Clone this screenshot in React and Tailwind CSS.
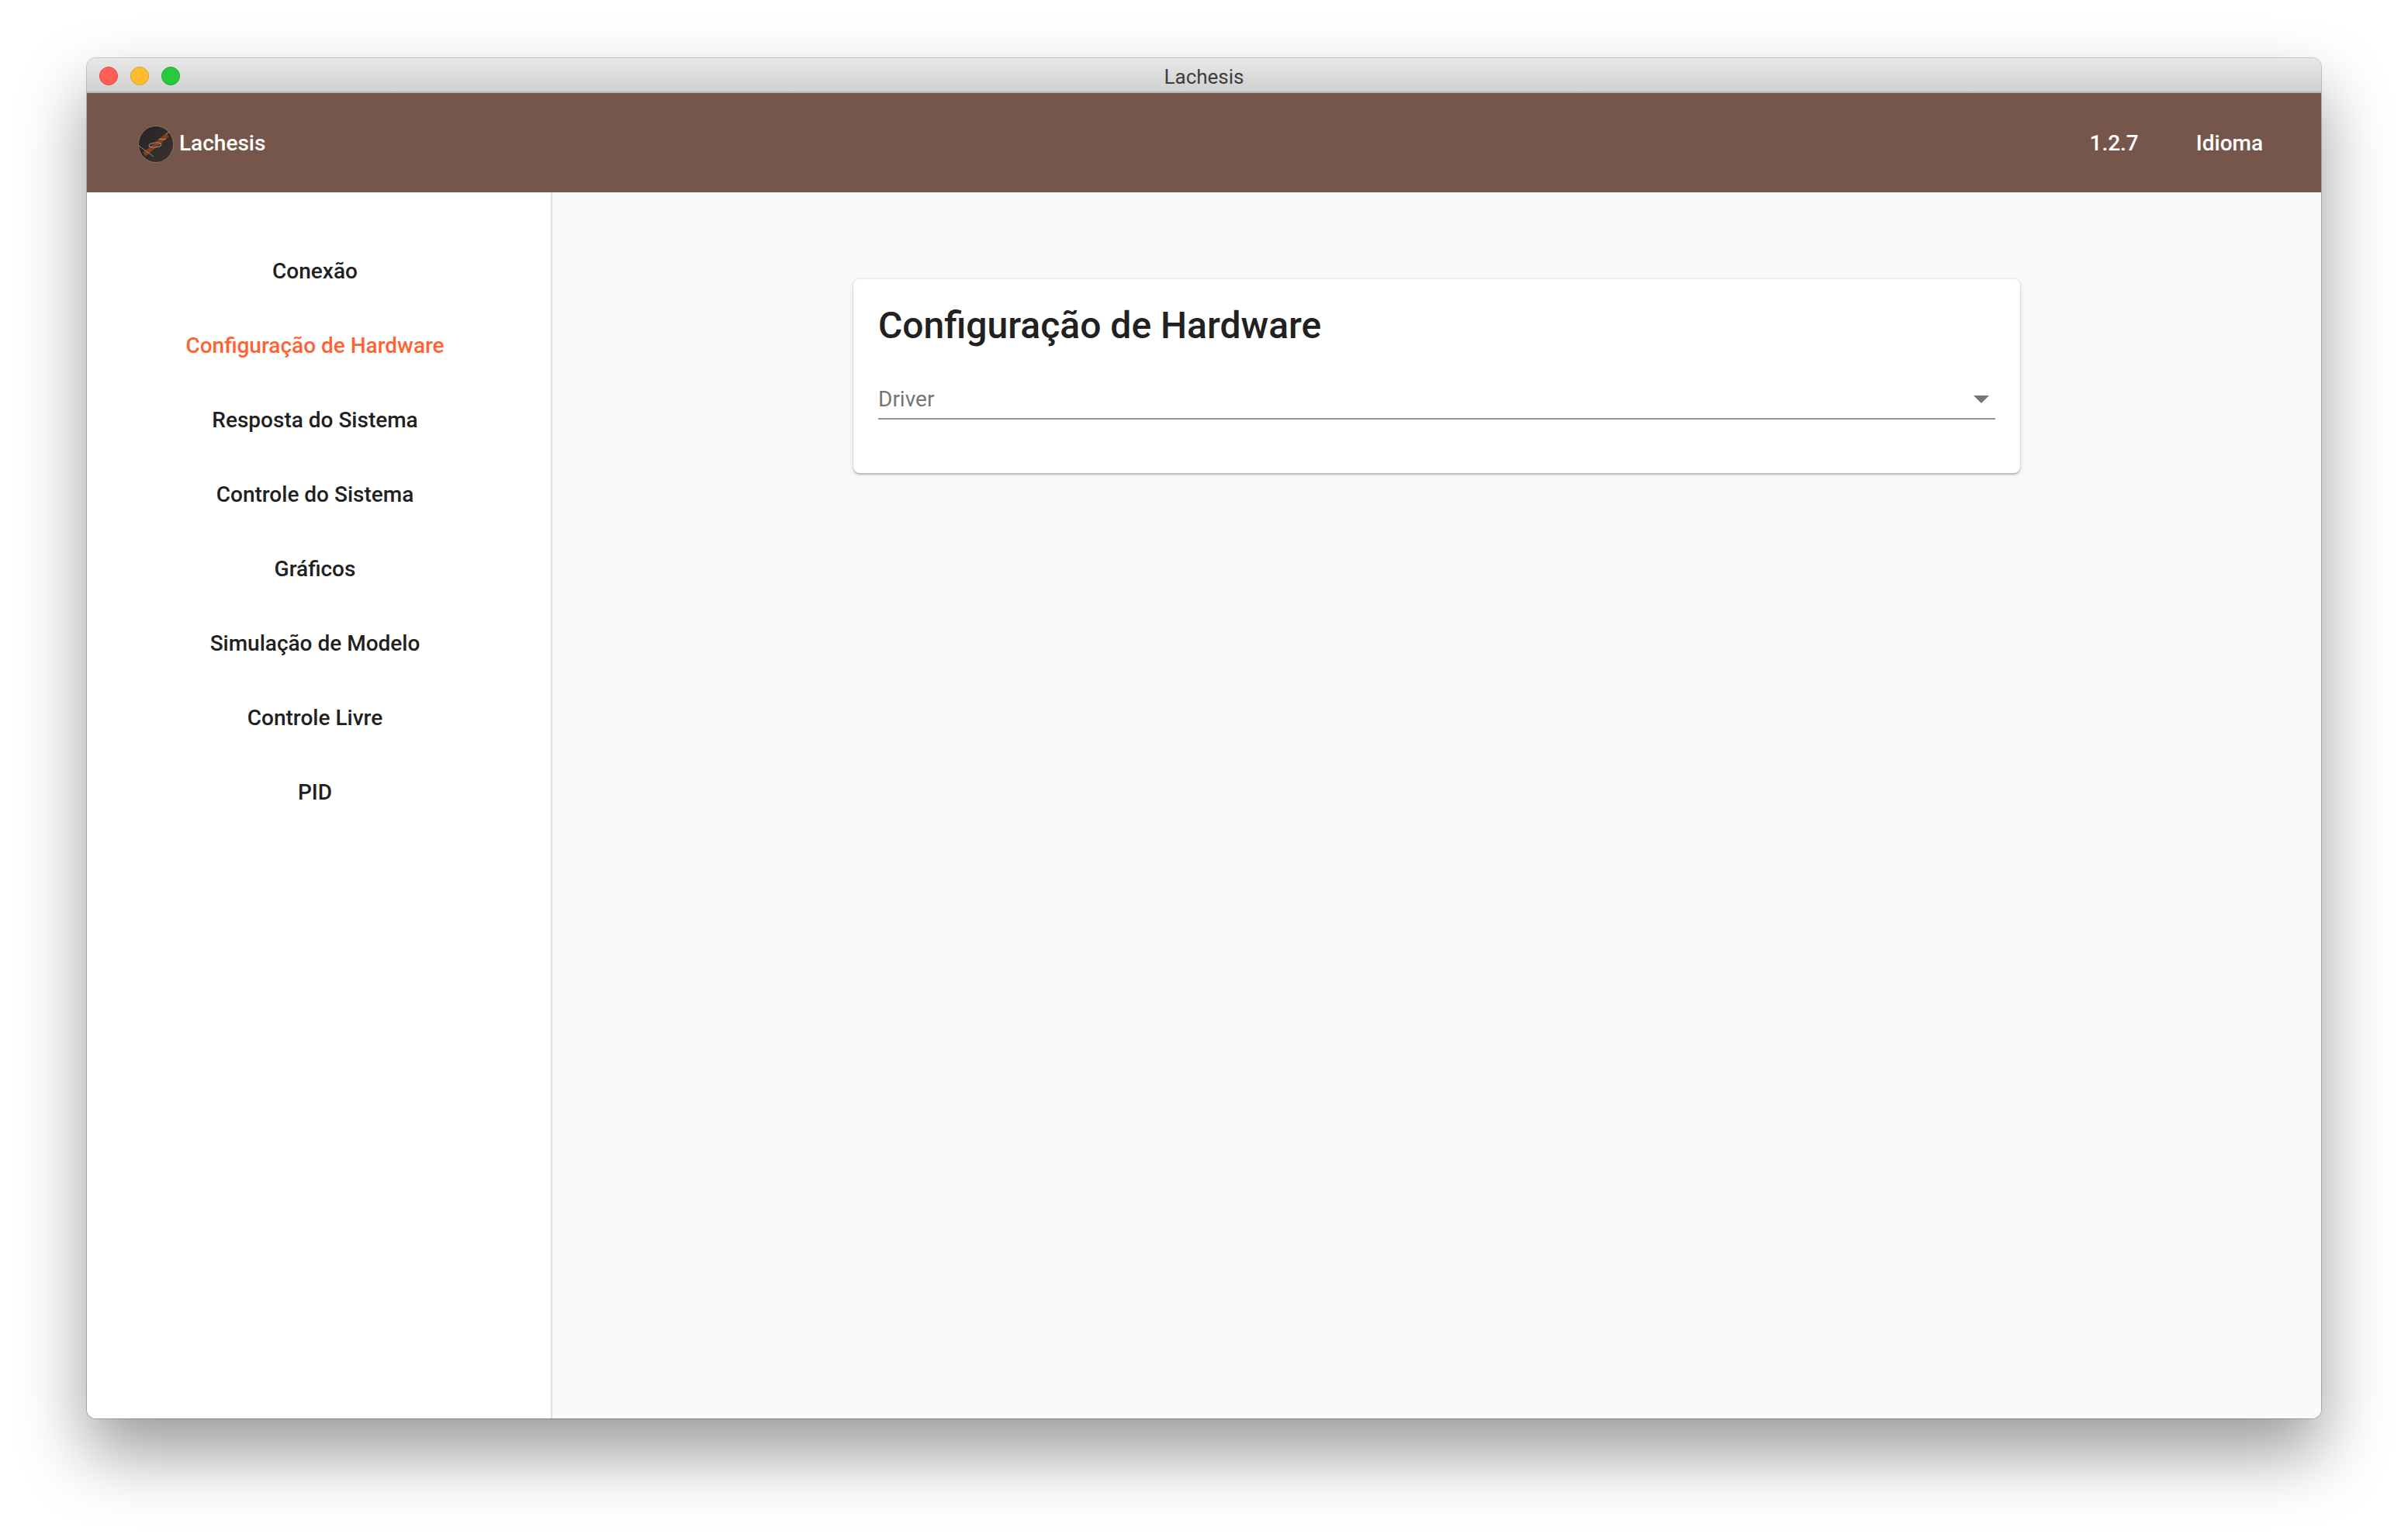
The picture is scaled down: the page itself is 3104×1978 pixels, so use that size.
const items = ["Conexão", "Configuração de Hardware", "Resposta do Sistema", "Controle do Sistema", "Gráficos", "Simulação de Modelo", "Controle Livre", "PID"];

function Logo() {
  return (
    <svg width="46" height="48" viewBox="0 0 46 48" className="shrink-0 relative top-[2px]">
      <defs>
        <linearGradient id="g" x1="0" y1="0" x2="1" y2="1">
          <stop offset="0" stopColor="#252322" />
          <stop offset="1" stopColor="#3a3230" />
        </linearGradient>
      </defs>
      <ellipse cx="23" cy="24" rx="22.5" ry="23.5" fill="url(#g)" stroke="#8b7a72" strokeWidth="0.8" />
      <path d="M8 37 L38 12" stroke="#873d16" strokeWidth="6" />
      <ellipse cx="22" cy="25" rx="8" ry="3" fill="none" stroke="#8d8a88" strokeWidth="1" transform="rotate(-5 22 25)" />
      <path d="M1 26 L20 40" stroke="#8d8a88" strokeWidth="1" fill="none" />
      <path d="M27 17 Q32 19 36 17 M36 11 L40 8" stroke="#a8a39f" strokeWidth="1" fill="none" />
    </svg>
  );
}

export default function App() {
  return (
    <div className="w-[3104px] h-[1978px] bg-white pt-[75px] pl-[112px] overflow-hidden font-['Roboto',sans-serif]">
      <div className="relative w-[2880px] h-[1754px] flex flex-col rounded-[12px] overflow-hidden shadow-[0_0_0_1px_rgba(0,0,0,0.2),0_44px_88px_rgba(0,0,0,0.4)]">
        <div className="h-[45px] shrink-0 flex items-center relative bg-gradient-to-b from-[#e8e8e8] to-[#d0d0d0] border-b-2 border-[#b8b8b8]">
          <div className="flex gap-[16px] pl-[16px] pt-[2px]">
            <span className="w-[24px] h-[24px] rounded-full bg-[#ff5f57] border border-[#e0443e]" />
            <span className="w-[24px] h-[24px] rounded-full bg-[#ffbd2e] border border-[#dea123]" />
            <span className="w-[24px] h-[24px] rounded-full bg-[#28c940] border border-[#1aab29]" />
          </div>
          <span className="absolute inset-x-0 top-[6px] text-center text-[26px] leading-[36px] text-[#3d3d3d]">Lachesis</span>
        </div>
        <div className="h-[128px] shrink-0 bg-[#76564a] flex items-center pl-[66px] pr-[75px] text-white text-[28px] font-medium">
          <Logo />
          <span className="ml-[7px] relative top-[1px]">Lachesis</span>
          <span className="ml-auto relative top-[1px]">1.2.7</span>
          <span className="ml-[74px] relative top-[1px]">Idioma</span>
        </div>
        <div className="flex-1 flex min-h-0">
          <nav className="w-[600px] shrink-0 bg-white border-r-2 border-[#e0e0e0] pt-[54px] pr-[10px]">
            {items.map((t, i) => (
              <div key={t} className={`h-[96px] flex items-center justify-center text-[28px] font-medium ${i === 1 ? "text-[#ff6333]" : "text-[#212121]"}`}>{t}</div>
            ))}
          </nav>
          <main className="flex-1 bg-[#fafafa] pt-[112px] pl-[388px]">
            <div className="w-[1504px] h-[250px] bg-white rounded-[8px] shadow-[0_2px_2px_rgba(0,0,0,0.2),0_1px_6px_rgba(0,0,0,0.14),0_0_2px_rgba(0,0,0,0.08)] pt-[32px] px-[32px]">
              <h1 className="text-[48px] leading-[56px] font-medium text-[#212121]">Configuração de Hardware</h1>
              <div className="mt-[49px] h-[44px] border-b-2 border-[#949494] flex items-center justify-between pb-[7px]">
                <span className="text-[28px] text-[#757575]">Driver</span>
                <svg width="20" height="10" viewBox="0 0 20 10" className="mr-[8px]"><path d="M0 0H20L10 10Z" fill="#757575" /></svg>
              </div>
            </div>
          </main>
        </div>
      </div>
    </div>
  );
}
